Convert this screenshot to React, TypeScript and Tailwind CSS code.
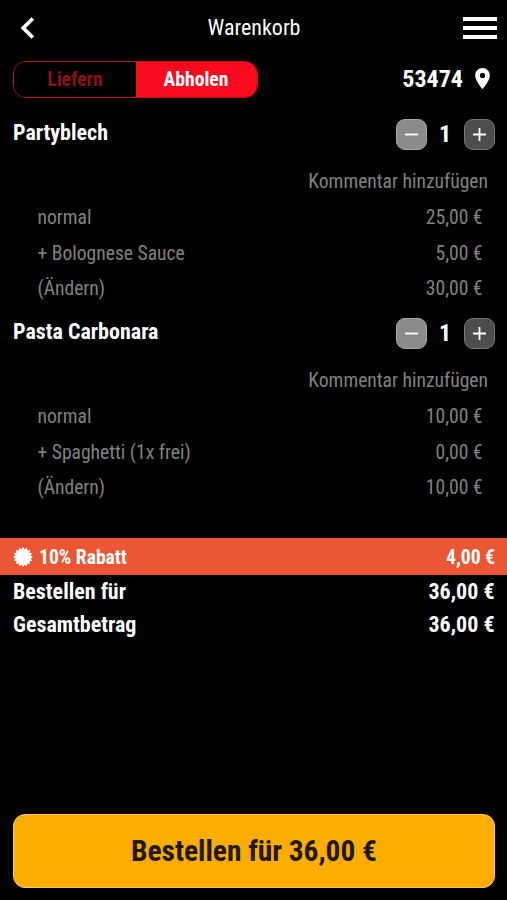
import { useState } from 'react';
import { MdLocationOn } from 'react-icons/md';

interface CartLine {
  label: string;
  price: string;
}

interface CartItemProps {
  name: string;
  lines: CartLine[];
}

const items: CartItemProps[] = [
  {
    name: 'Partyblech',
    lines: [
      { label: 'normal', price: '25,00 €' },
      { label: '+ Bolognese Sauce', price: '5,00 €' },
      { label: '(Ändern)', price: '30,00 €' },
    ],
  },
  {
    name: 'Pasta Carbonara',
    lines: [
      { label: 'normal', price: '10,00 €' },
      { label: '+ Spaghetti (1x frei)', price: '0,00 €' },
      { label: '(Ändern)', price: '10,00 €' },
    ],
  },
];

// 16-zackiger Stern für den Rabatt
const burst = Array.from({ length: 32 }, (_, i) => {
  const r = i % 2 === 0 ? 10 : 7.8;
  const a = (i * Math.PI) / 16;
  return `${(10 + r * Math.sin(a)).toFixed(2)},${(10 - r * Math.cos(a)).toFixed(2)}`;
}).join(' ');

function Header() {
  return (
    <header className="flex h-[56px] items-center justify-between pr-[10px] pl-[20px]">
      <button className="flex w-[25px]" aria-label="Zurück">
        <svg className="h-[22px] w-[15px]" viewBox="0 0 15 22" fill="none" stroke="white" strokeWidth="3.8">
          <path d="M12.8 1.5 3.3 11l9.5 9.5" />
        </svg>
      </button>
      <h1 className="text-[22px] leading-none">Warenkorb</h1>
      <button className="flex w-[34px] flex-col gap-[5px]" aria-label="Menü">
        <span className="h-[4px] w-full bg-white" />
        <span className="h-[4px] w-full bg-white" />
        <span className="h-[4px] w-full bg-white" />
      </button>
    </header>
  );
}

function CartItem({ name, lines }: CartItemProps) {
  const [count, setCount] = useState(1);

  return (
    <section className="h-[199px]">
      <div className="flex h-[44px] items-center justify-between pr-[12px] pl-[13px]">
        <h2 className="pb-[2px] text-[22px] leading-none font-bold">{name}</h2>
        <div className="flex items-center">
          <button
            onClick={() => setCount(Math.max(0, count - 1))}
            className="flex h-[31px] w-[31px] items-center justify-center rounded-[9px] border border-[#a8a8a8] bg-[#8b8b8b]"
          >
            <svg className="h-[13px] w-[13px]" viewBox="0 0 13 13" stroke="white" strokeWidth="1.8">
              <path d="M0 6.5h13" />
            </svg>
          </button>
          <span className="w-[37px] pr-[1px] text-center text-[24px] leading-none font-bold">{count}</span>
          <button
            onClick={() => setCount(count + 1)}
            className="flex h-[31px] w-[31px] items-center justify-center rounded-[9px] border border-[#777777] bg-[#4d4d4d]"
          >
            <svg className="h-[13px] w-[13px]" viewBox="0 0 13 13" stroke="white" strokeWidth="1.8">
              <path d="M0 6.5h13M6.5 0v13" />
            </svg>
          </button>
        </div>
      </div>
      <div className="text-[19.6px] text-[#808080]">
        <div className="flex h-[44px] items-center justify-end pt-[7px] pr-[19px] leading-none">Kommentar hinzufügen</div>
        {lines.map((line) => (
          <div key={line.label} className="flex h-[35.4px] items-center justify-between pt-[1px] pr-[24.5px] pl-[37.5px] leading-none">
            <span>{line.label}</span>
            <span>{line.price}</span>
          </div>
        ))}
      </div>
    </section>
  );
}

export default function App() {
  return (
    <div className="flex h-[900px] w-[507px] flex-col overflow-hidden bg-black font-['Roboto_Condensed',Roboto,sans-serif] text-white [font-stretch:75%]">
      <Header />

      <div className="flex h-[56px] items-start justify-between pt-[5px] pr-[12px] pl-[13px]">
        <div className="flex h-[37px] w-[245px] overflow-hidden rounded-[13px] border border-[#c0121e] text-[19.6px] font-bold">
          <button className="w-[122px] bg-black leading-none text-[#8a1218]">Liefern</button>
          <button className="flex-1 bg-[#fa0a1e] pr-[1px] leading-none">Abholen</button>
        </div>
        <div className="flex h-[36px] items-center">
          <span className="text-[24px] leading-none font-bold">53474</span>
          <MdLocationOn className="mb-[1px] ml-[7px] h-[25px] w-[25px]" />
        </div>
      </div>

      {items.map((item) => (
        <CartItem key={item.name} {...item} />
      ))}

      <div className="mt-[28px] flex h-[37px] items-center bg-[#eb5735] pr-[12px] pl-[13px] text-[19.6px] leading-none font-bold">
        <svg className="mr-[6px] h-[20px] w-[20px]" viewBox="0 0 20 20" fill="white">
          <polygon points={burst} />
        </svg>
        <span className="flex-1 pt-[2px]">10% Rabatt</span>
        <span className="pt-[2px]">4,00 €</span>
      </div>
      <div className="text-[22px] leading-[33px] font-bold">
        <div className="flex justify-between pr-[12.5px] pl-[13px]">
          <span>Bestellen für</span>
          <span>36,00 €</span>
        </div>
        <div className="flex justify-between pr-[12.5px] pl-[13px]">
          <span>Gesamtbetrag</span>
          <span>36,00 €</span>
        </div>
      </div>

      <button className="mr-[12px] mb-[12px] ml-[13px] mt-auto h-[74px] rounded-[12px] border border-[#ffc95c] bg-[#fdad00] pt-[2px] text-[29.4px] leading-none font-bold text-[#1f1a0c]">
        Bestellen für 36,00 €
      </button>
    </div>
  );
}
